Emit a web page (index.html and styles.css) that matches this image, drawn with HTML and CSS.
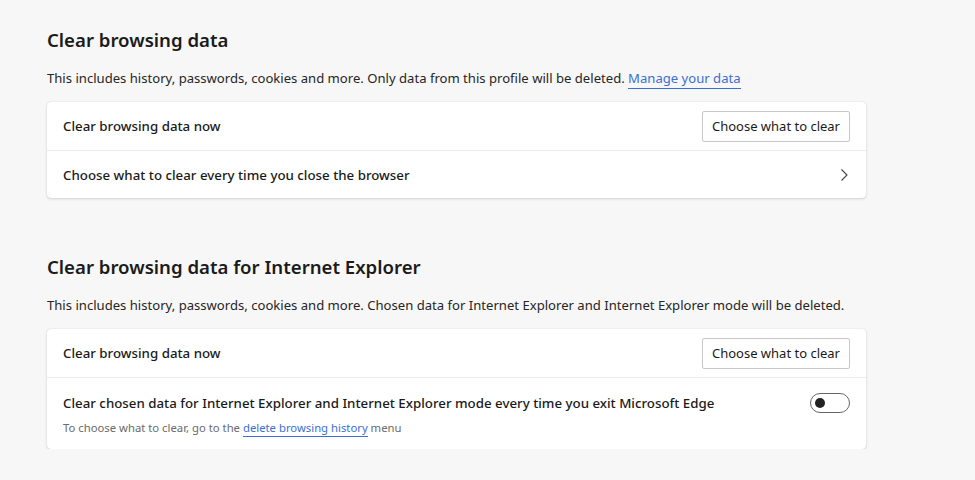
FILE: index.html
```html
<!DOCTYPE html>
<html>
<head>
<meta charset="utf-8">
<link rel="stylesheet" href="styles.css">
</head>
<body>
<main class="page">
  <section class="section">
    <h2 class="title">Clear browsing data</h2>
    <p class="desc">This includes history, passwords, cookies and more. Only data from this profile will be deleted. <a class="link" href="#">Manage your data</a></p>
    <div class="card">
      <div class="row">
        <span class="label">Clear browsing data now</span>
        <button class="btn">Choose what to clear</button>
      </div>
      <div class="row">
        <span class="label">Choose what to clear every time you close the browser</span>
        <svg class="chev" width="16" height="16" viewBox="0 0 16 16"><path d="M5.5 2.5 L11 8 L5.5 13.5" fill="none" stroke="#444" stroke-width="1.1"/></svg>
      </div>
    </div>
  </section>
  <section class="section second">
    <h2 class="title">Clear browsing data for Internet Explorer</h2>
    <p class="desc">This includes history, passwords, cookies and more. Chosen data for Internet Explorer and Internet Explorer mode will be deleted.</p>
    <div class="card">
      <div class="row">
        <span class="label">Clear browsing data now</span>
        <button class="btn">Choose what to clear</button>
      </div>
      <div class="row tall">
        <div class="stack">
          <span class="label">Clear chosen data for Internet Explorer and Internet Explorer mode every time you exit Microsoft Edge</span>
          <span class="sub">To choose what to clear, go to the <a class="link" href="#">delete browsing history</a> menu</span>
        </div>
        <span class="toggle"><span class="knob"></span></span>
      </div>
    </div>
  </section>
</main>
</body>
</html>
```
FILE: styles.css
```css
html, body { margin: 0; padding: 0; background: #f7f7f7; }
body { font-family: "Noto Sans", "Open Sans", sans-serif; color: #1a1a1a; }
.page { padding: 26px 0 0 47px; width: 819px; }
.section.second { margin-top: 55px; }
.title { margin: 0; font-size: 18.6px; line-height: 28px; font-weight: 600; color: #1b1b1b; }
.desc { margin: 14px 0 14px; font-size: 13.1px; line-height: 20px; color: #262626; }
.link { color: #3b6fd4; text-decoration: none; border-bottom: 1px solid #3b6fd4; padding-bottom: 1px; }
.card { background: #fff; border-radius: 4px; box-shadow: 0 0 1px rgba(0,0,0,0.18), 0 1px 3px rgba(0,0,0,0.14); }
.row { display: flex; align-items: center; justify-content: space-between; height: 48px; padding: 0 16px; box-sizing: border-box; }
.row + .row { border-top: 1px solid #ebebeb; }
.row.tall { height: 72px; align-items: flex-start; padding-top: 15px; }
.label { font-size: 13.3px; font-weight: 500; color: #1a1a1a; line-height: 20px; }
.stack { display: flex; flex-direction: column; gap: 8px; }
.sub { font-size: 11.3px; color: #6b6b6b; line-height: 14px; }
.sub .link { color: #3b6fd4; }
.btn { font-family: inherit; font-size: 13px; color: #1a1a1a; background: #fff; border: 1px solid #c8c8c8; border-radius: 2px; height: 31px; padding: 0 9px; cursor: pointer; }
.chev { margin-right: -2px; }
.toggle { width: 34px; height: 18px; border: 1px solid #666; border-radius: 10px; display: flex; align-items: center; padding-left: 4px; margin-top: 0; }
.knob { width: 10px; height: 10px; border-radius: 50%; background: #222; }
```
